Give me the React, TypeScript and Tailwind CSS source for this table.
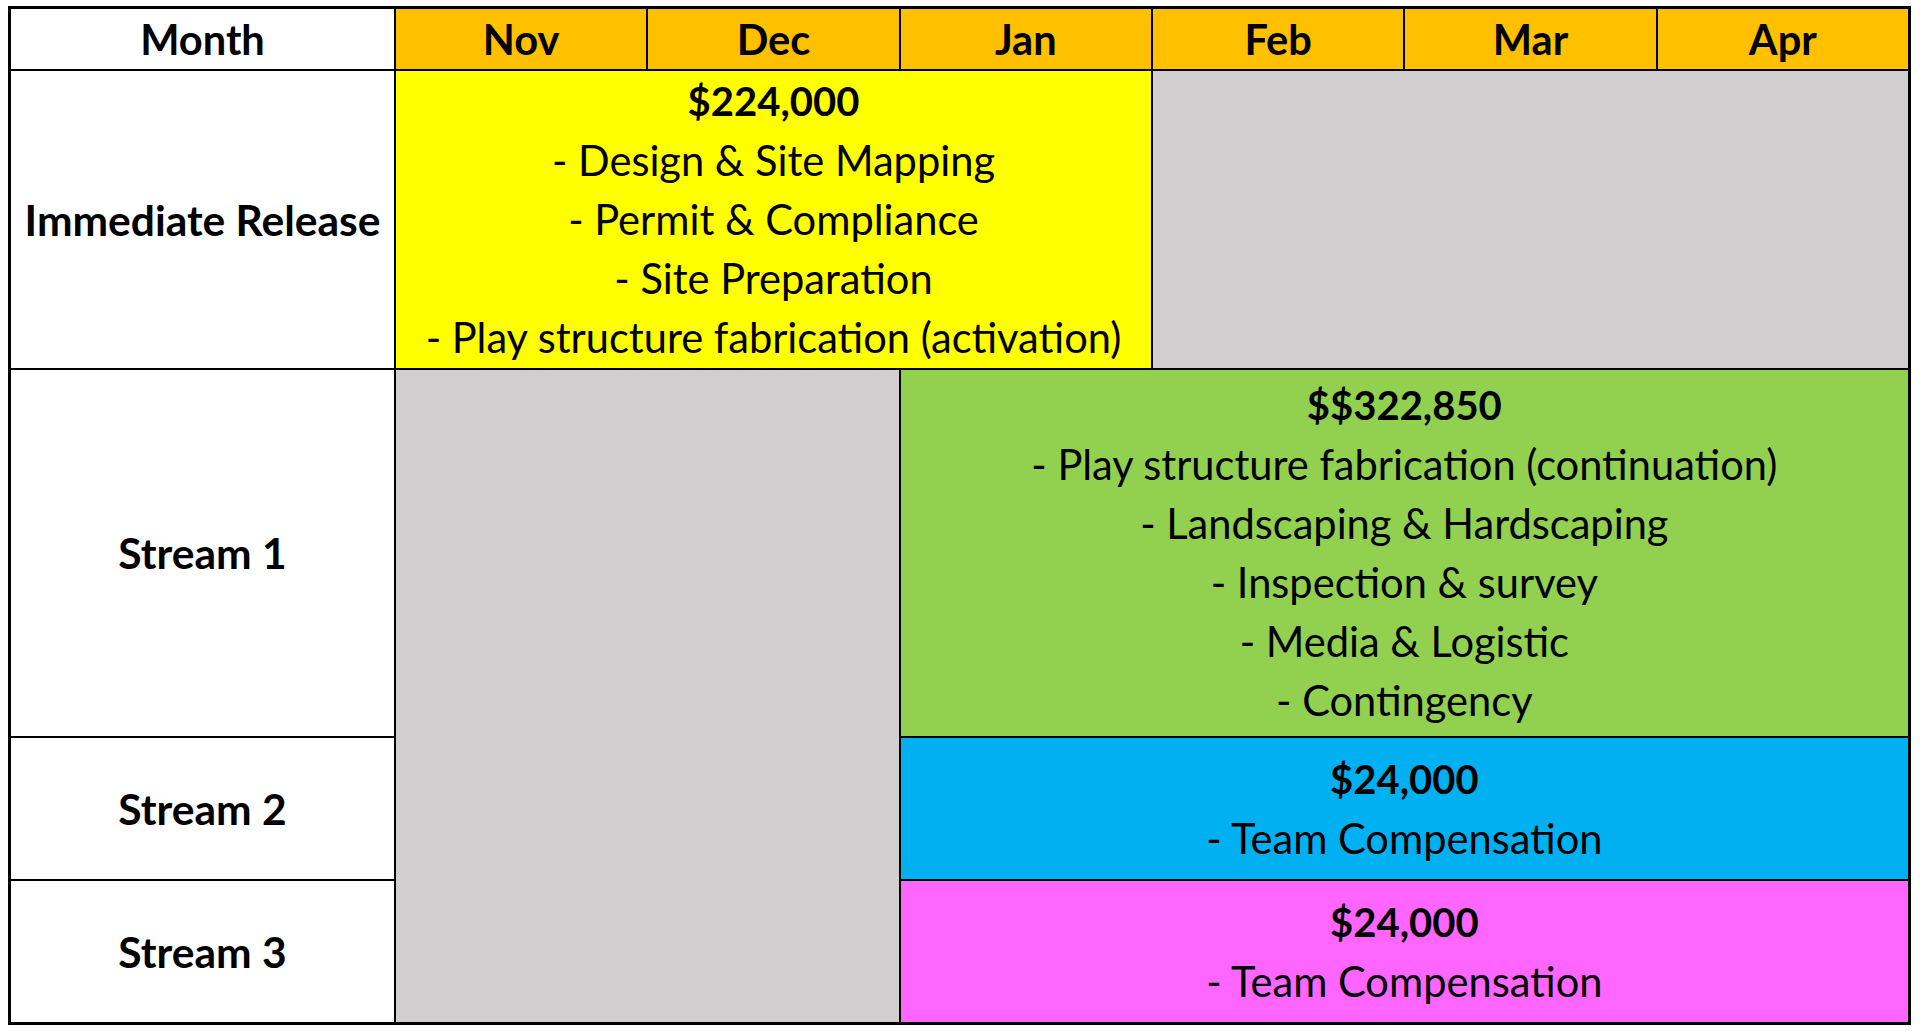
import React from "react";

// --- Funding release timeline (spreadsheet-style grid) ---

const months = ["Nov", "Dec", "Jan", "Feb", "Mar", "Apr"];

function Block({ amount, items, className }: { amount: string; items: string[]; className: string }) {
    return (
        <div className={`flex flex-col items-center justify-center text-center leading-[59px] ${className}`}>
            <span className="font-bold text-[40px]">{amount}</span>
            {items.map((it) => (
                <span key={it} className="whitespace-nowrap">- {it}</span>
            ))}
        </div>
    );
}

function Label({ children }: { children: React.ReactNode }) {
    return <div className="bg-white flex items-center justify-center font-bold text-[42.5px] whitespace-nowrap">{children}</div>;
}

export default function App() {
    return (
        <div className="min-h-screen bg-white pt-[6px] pl-[8px] text-black text-[41.6px]" style={{ fontFamily: "Lato, 'Open Sans', sans-serif" }}>
            <div className="w-[1903px] border-[3px] border-black bg-black grid grid-cols-[383px_repeat(6,1fr)] grid-rows-[60px_297px_366px_141px_141px] gap-[2px]">
                {/* Header */}
                <div className="bg-white flex items-center justify-center font-bold">Month</div>
                {months.map((m) => (
                    <div key={m} className="bg-[#FFC000] flex items-center justify-center font-bold">{m}</div>
                ))}

                {/* Immediate Release */}
                <Label>Immediate Release</Label>
                <Block
                    className="col-span-3 bg-[#FFFF00]"
                    amount="$224,000"
                    items={["Design & Site Mapping", "Permit & Compliance", "Site Preparation", "Play structure fabrication (activation)"]}
                />
                <div className="col-span-3 bg-[#D0CECE]" />

                {/* Stream 1 */}
                <Label>Stream 1</Label>
                <div className="col-span-2 row-span-3 bg-[#D0CECE]" />
                <Block
                    className="col-span-4 bg-[#92D050]"
                    amount="$$322,850"
                    items={["Play structure fabrication (continuation)", "Landscaping & Hardscaping", "Inspection & survey", "Media & Logistic", "Contingency"]}
                />

                {/* Stream 2 */}
                <Label>Stream 2</Label>
                <Block className="col-span-4 bg-[#00B0F0]" amount="$24,000" items={["Team Compensation"]} />

                {/* Stream 3 */}
                <Label>Stream 3</Label>
                <Block className="col-span-4 bg-[#FF66FF]" amount="$24,000" items={["Team Compensation"]} />
            </div>
        </div>
    );
}
